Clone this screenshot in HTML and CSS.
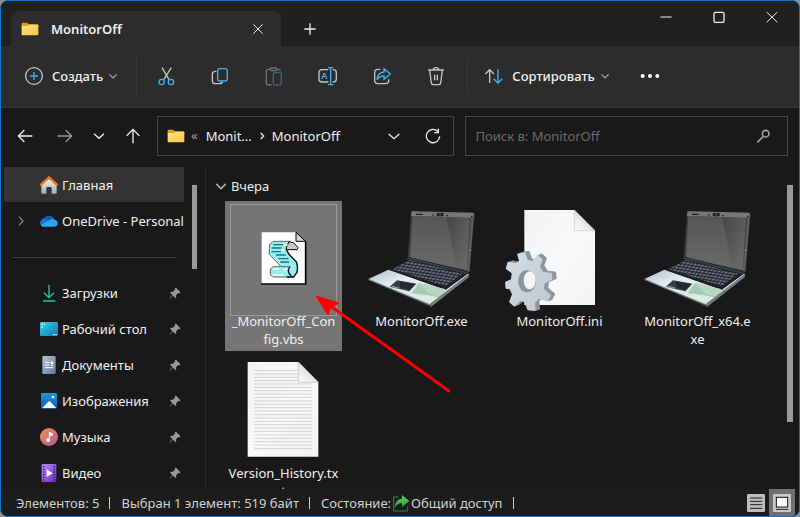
FILE: index.html
```html
<!DOCTYPE html>
<html lang="ru">
<head>
<meta charset="utf-8">
<title>MonitorOff</title>
<link rel="stylesheet" href="styles.css">
</head>
<body>
<svg class="defs" aria-hidden="true">
  <defs>
    <linearGradient id="gFolder" x1="0" y1="0" x2="1" y2="1"><stop offset="0" stop-color="#ffe391"/><stop offset="1" stop-color="#fcc536"/></linearGradient>
    <linearGradient id="gLid" x1="0" y1="0" x2="0" y2="1"><stop offset="0" stop-color="#565656"/><stop offset="1" stop-color="#6a6a6a"/></linearGradient>
    <linearGradient id="gGlare" x1="0" y1="0" x2="1" y2="1"><stop offset="0" stop-color="#454545"/><stop offset="1" stop-color="#6e6e6e"/></linearGradient>
    <linearGradient id="gPalm" x1="0" y1="0" x2="1" y2="1"><stop offset="0" stop-color="#aebcc4"/><stop offset=".3" stop-color="#e3ecf1"/><stop offset=".55" stop-color="#dce9e6"/><stop offset="1" stop-color="#dfeae2"/></linearGradient>
    <linearGradient id="gPage" x1="0" y1="0" x2="1" y2="1"><stop offset="0" stop-color="#f1f2f3"/><stop offset=".5" stop-color="#f8f9fb"/><stop offset="1" stop-color="#f3f4f6"/></linearGradient>
    <linearGradient id="gFold" x1="0" y1="1" x2="1" y2="0"><stop offset="0" stop-color="#fdfdfd"/><stop offset="1" stop-color="#c9c9c9"/></linearGradient>
    <linearGradient id="gGear" x1="0" y1="0" x2="1" y2="1"><stop offset="0" stop-color="#d5dee5"/><stop offset="1" stop-color="#bcc7d0"/></linearGradient>
    <linearGradient id="gHome" x1="0" y1="0" x2="0" y2="1"><stop offset="0" stop-color="#f2f2f2"/><stop offset="1" stop-color="#a9a9a9"/></linearGradient>
    <linearGradient id="gDesk" x1="0" y1="0" x2="1" y2="1"><stop offset="0" stop-color="#35d3e6"/><stop offset="1" stop-color="#0d78b8"/></linearGradient>
    <linearGradient id="gDoc" x1="0" y1="0" x2="1" y2="1"><stop offset="0" stop-color="#b3c4d8"/><stop offset="1" stop-color="#60799b"/></linearGradient>
    <linearGradient id="gPic" x1="0" y1="0" x2="0" y2="1"><stop offset="0" stop-color="#2196e0"/><stop offset="1" stop-color="#0b5cad"/></linearGradient>
    <linearGradient id="gMusic" x1="0" y1="0" x2="1" y2="1"><stop offset="0" stop-color="#f0915a"/><stop offset=".6" stop-color="#cf6a74"/><stop offset="1" stop-color="#a85aa8"/></linearGradient>
    <linearGradient id="gVideo" x1="0" y1="0" x2="1" y2="1"><stop offset="0" stop-color="#b78af2"/><stop offset="1" stop-color="#6b2fc0"/></linearGradient>
    <linearGradient id="gShare" x1="0" y1="0" x2="0" y2="1"><stop offset="0" stop-color="#5ed257"/><stop offset="1" stop-color="#239b3a"/></linearGradient>
    <pattern id="pKeys" width="11" height="9" patternUnits="userSpaceOnUse" patternTransform="matrix(1 .16 -.62 .9 0 0)"><rect width="11" height="9" fill="#20232b"/><rect x="1" y="1" width="8" height="5" fill="#747c8d"/></pattern>
    <pattern id="pDither" width="8" height="8" patternUnits="userSpaceOnUse"><rect width="8" height="8" fill="#f0ffff"/><rect width="4" height="4" fill="#3fdede"/><rect x="4" y="4" width="4" height="4" fill="#3fdede"/></pattern>
    <symbol id="folder" viewBox="0 0 54 42"><path d="M2 9V5q0-3 3-3h13l6 5h25q3 0 3 3v6H2z" fill="#e59f14"/><path d="M2 12h18l5-4h24q3 0 3 3v26q0 3-3 3H5q-3 0-3-3z" fill="url(#gFolder)"/></symbol>
    <symbol id="pin" viewBox="0 0 42 42"><path d="M24 2L40 18 37 22 33 21 25 28Q27 34 23 39L14 30 3 40 2 39 12 28 3 19Q8 15 14 17L21 9 20 6z" fill="#929ba4"/></symbol>
    <symbol id="chev" viewBox="0 0 30 30"><path d="M6 11l9 9 9-9" fill="none" stroke="currentColor" stroke-width="3"/></symbol>
    <symbol id="laptop" viewBox="9 3 351 324">
      <path d="M153 38q1-4 5-4l180 4q5 1 5 6l-14 170q-1 4-4 4l-181-42q-2-1-1-5z" fill="#3a3a3a"/>
      <path d="M154 38q1-4 5-4l179 4q5 1 5 6l-1 10-189-6z" fill="#777"/>
      <path d="M157 48l172 7-9 155-170-37z" fill="url(#gLid)"/>
      <path d="M259 53l70 3-9 152-31-7z" fill="url(#gGlare)"/>
      <path d="M334 46l8 0-14 168-8-2z" fill="#5b5c5d"/>
      <rect x="230" y="39" width="21" height="10" rx="3" fill="#14171d"/><rect x="236" y="41" width="9" height="5" fill="#2b4f94"/>
      <path d="M168 43h20M217 45h4M259 47h5M333 50h4" stroke="#202020" stroke-width="4"/><path d="M328 151h4" stroke="#bbb" stroke-width="3"/>
      <path d="M25 236l122-66 180 47 1 8-115 92-5 1z" fill="#17191d"/>
      <path d="M146 171l181 47-9 6-178-47z" fill="#3b4046"/>
      <path d="M25 237l60-28 172 60 66-47 5 1-115 90-5 3z" fill="url(#gPalm)"/>
      <path d="M90 209l58-31 172 44-63 47z" fill="#1d2026"/>
      <path d="M97 207l52-27 158 41-50 38z" fill="url(#pKeys)"/>
      <path d="M177 249l79 19-15 25-44-9-42-4z" fill="#a7c8b2"/><path d="M177 249l79 19-14 24-35-11z" fill="#b9d6c3"/>
      <path d="M111 241l58 10-21 23-59-14z" fill="#383e44"/><path d="M119 243l47 9-18 18-28-8z" fill="#242a30"/><path d="M97 257l22 6-4 4-22-6z" fill="#8e989d"/>
      <path d="M210 311l115-88 2 8-114 90z" fill="#727b7e"/><path d="M25 237l184 75 3 9L27 242z" fill="#758087"/><path d="M28 243l183 76" stroke="#15171a" stroke-width="3"/>
    </symbol>
    <path id="gearEdge" d="M66 161L90 157 98 179 112 184 127 164 143 178 135 200 145 216 170 219 172 240 149 250 147 267 168 286 158 305 132 296 120 308 122 333 98 331 88 306 76 303 58 320 42 306 51 283 44 268 32 266 30 246 48 238 50 220 32 206 38 185 60 190 72 183z"/>
  </defs>
</svg>
<div class="window">
  <header class="titlebar">
    <div class="tab">
      <svg class="folder"><use href="#folder"/></svg>
      <span class="tab-title">MonitorOff</span>
      <button class="btn" aria-label="Закрыть вкладку"><svg class="ic12" viewBox="0 0 36 36"><path d="M4 4l28 28M32 4L4 32" class="w"/></svg></button>
    </div>
    <button class="btn newtab" aria-label="Новая вкладка"><svg class="ic12" viewBox="0 0 36 36"><path d="M18 1v34M1 18h34" class="w bold"/></svg></button>
    <div class="caption">
      <button class="btn" aria-label="Свернуть"><svg class="ic12" viewBox="0 0 36 36"><path d="M1 18h34" class="w"/></svg></button>
      <button class="btn" aria-label="Развернуть"><svg class="ic12" viewBox="0 0 36 36"><rect x="3" y="4" width="30" height="30" rx="4" class="w bold"/></svg></button>
      <button class="btn" aria-label="Закрыть"><svg class="ic12" viewBox="0 0 36 36"><path d="M2 3l32 31M34 3L2 34" class="w"/></svg></button>
    </div>
  </header>

  <div class="toolbar" role="toolbar">
    <button class="btn command"><svg class="ic20" viewBox="0 0 60 60"><circle cx="30" cy="30" r="25" class="g"/><path d="M30 18v24M18 30h24" class="b"/></svg>Создать<svg class="chev"><use href="#chev"/></svg></button>
    <div class="tools">
      <button class="btn" aria-label="Вырезать"><svg class="ic20" viewBox="465 200 60 60"><path d="M483 205l21 36M511 205l-23 36" class="g"/><circle cx="482" cy="248" r="8" class="b"/><circle cx="510" cy="248" r="8" class="b"/></svg></button>
      <button class="btn" aria-label="Копировать"><svg class="ic20" viewBox="630 200 60 60"><path d="M649 216h-3q-9 0-9 9v19q0 9 9 9h12q8 0 9-5" class="g"/><rect x="653" y="208" width="29" height="37" rx="7" class="b"/></svg></button>
      <button class="btn dim" aria-label="Вставить"><svg class="ic20" viewBox="792 200 60 60"><path d="M815 257h-10q-6 0-6-6v-35q0-6 6-6h5M832 210h3q6 0 6 6" class="g"/><rect x="810" y="206" width="21" height="8" rx="4" class="g"/><rect x="820" y="220" width="24" height="37" rx="5" class="b"/></svg></button>
      <button class="btn" aria-label="Переименовать"><svg class="ic20" viewBox="-5 201 60 60"><path d="M26 212H7q-9 0-9 9v19q0 9 9 9h19M39 212h2q9 0 9 9v19q0 9-9 9h-2" class="g"/><path d="M33 206v51M25 206h16M25 257h16" class="b"/><text x="5" y="241" class="glyph">A</text></svg></button>
      <button class="btn" aria-label="Поделиться"><svg class="ic20" viewBox="157 200 60 60"><path d="M182 210h-7q-10 0-10 10v23q0 10 10 10h22q10 0 10-10v-3" class="g"/><path d="M193 208l19 16-19 16v-10q-14 0-21 11 2-22 21-23z" class="b"/></svg></button>
      <button class="btn" aria-label="Удалить"><svg class="ic20" viewBox="320 200 60 60"><path d="M326 212h48M342 211q0-6 8-6t8 6M331 213l5 38q1 5 6 5h16q5 0 6-5l5-38M346 226v17M354 226v17" class="g"/></svg></button>
    </div>
    <button class="btn command"><svg class="ic20" viewBox="494 200 60 60"><path d="M511 251V211M498 224l13-13 13 13" class="g"/><path d="M536 210v40M523 238l13 13 13-13" class="b"/></svg>Сортировать<svg class="chev"><use href="#chev"/></svg></button>
    <button class="btn more" aria-label="Подробнее"><svg class="ic20" viewBox="0 0 60 60"><circle cx="8" cy="30" r="6"/><circle cx="30" cy="30" r="6"/><circle cx="52" cy="30" r="6"/></svg></button>
  </div>

  <nav class="navbar">
    <div class="history">
      <button class="btn back" aria-label="Назад"><svg class="ic16" viewBox="0 0 48 48"><path d="M46 24H4M22 6L4 24l18 18" class="w bold"/></svg></button>
      <button class="btn faded" aria-label="Вперед"><svg class="ic16" viewBox="0 0 48 48"><path d="M2 24h42M26 6l18 18-18 18" class="w bold"/></svg></button>
      <button class="btn" aria-label="Последние расположения"><svg class="ic12" viewBox="0 0 36 36"><path d="M3 11l15 14 15-14" class="w bold"/></svg></button>
      <button class="btn" aria-label="Вверх"><svg class="ic16" viewBox="0 0 48 48"><path d="M24 46V4M5 23L24 4l19 19" class="w bold"/></svg></button>
    </div>
    <div class="address">
      <svg class="folder"><use href="#folder"/></svg>
      <span class="back-mark">«</span>
      <a href="#">Monit...</a>
      <svg class="crumb" viewBox="0 0 30 30"><path d="M11 6l9 9-9 9" class="w bold"/></svg>
      <a href="#" class="current">MonitorOff</a>
      <button class="btn" aria-label="Предыдущие расположения"><svg class="ic12" viewBox="0 0 36 36"><path d="M2 12l16 14 16-14" class="w bold"/></svg></button>
      <button class="btn refresh" aria-label="Обновить"><svg class="ic16" viewBox="0 0 48 48"><path d="M44 25A20 20 0 1 1 38 10M40 2v12H28" class="w bold"/></svg></button>
    </div>
    <div class="search">
      <input type="search" aria-label="Поиск" placeholder="Поиск в: MonitorOff">
      <svg class="ic16" viewBox="0 0 48 48"><circle cx="32" cy="17" r="10"/><path d="M25 25L7 43"/></svg>
    </div>
  </nav>

  <div class="body">
    <aside class="sidebar">
      <ul class="places">
        <li><a href="#" class="place active"><svg class="pic" viewBox="0 0 54 54"><path d="M4 27L27 8l23 19v23q0 3-3 3H35V36q0-3-3-3H22q-3 0-3 3v17H7q-3 0-3-3z" fill="url(#gHome)"/><path d="M3 26L27 4l24 22" fill="none" stroke="#e8761f" stroke-width="7" stroke-linecap="round" stroke-linejoin="round"/></svg>Главная</a></li>
        <li><a href="#" class="place"><svg class="expand" viewBox="0 0 30 36"><path d="M9 5l12 13L9 31"/></svg><svg class="pic" viewBox="0 0 54 54"><path d="M8 34a14 14 0 0 1 7-18 17 17 0 0 1 28 6L24 40z" fill="#0b62b5"/><path d="M12 44a12 12 0 1 1 7-22L44 40z" fill="#1277d4"/><path d="M12 44q-8 0-9-6l25-13q7-8 16-2 9 2 9 11 0 10-10 10z" fill="#2ba6ee"/></svg>OneDrive - Personal</a></li>
      </ul>
      <hr>
      <ul class="places">
        <li><a href="#" class="place"><svg class="pic" viewBox="0 0 54 54"><path d="M27 2v38M12 26l15 15 15-15M9 51h37" fill="none" stroke="#21c79c" stroke-width="4"/></svg>Загрузки<svg class="pin"><use href="#pin"/></svg></a></li>
        <li><a href="#" class="place"><svg class="pic" viewBox="0 0 54 54"><rect y="6" width="54" height="42" rx="4" fill="url(#gDesk)"/><path d="M5 13h4M5 22h4M12 13h3M39 44h4M46 44h4" stroke="#dffaff" stroke-width="4"/></svg>Рабочий стол<svg class="pin"><use href="#pin"/></svg></a></li>
        <li><a href="#" class="place"><svg class="pic" viewBox="0 0 54 54"><rect x="7" width="40" height="54" rx="4" fill="url(#gDoc)"/><path d="M15 19h13M15 27h13M15 35h25M33 28h7" stroke="#fff" stroke-width="3"/><rect x="32" y="17" width="8" height="7" fill="#fff"/></svg>Документы<svg class="pin"><use href="#pin"/></svg></a></li>
        <li><a href="#" class="place"><svg class="pic" viewBox="0 0 54 54"><rect x="3" y="3" width="48" height="48" rx="4" fill="url(#gPic)"/><path d="M7 47l18-18q3-3 6 0l17 18q-1 1-3 1H10q-2 0-3-1z" fill="#fff"/><circle cx="39" cy="15" r="4" fill="#fff"/></svg>Изображения<svg class="pin"><use href="#pin"/></svg></a></li>
        <li><a href="#" class="place"><svg class="pic" viewBox="0 0 54 54"><circle cx="27" cy="27" r="27" fill="url(#gMusic)"/><circle cx="24" cy="36" r="6" fill="#fff"/><path d="M28 36V13l9 4v6l-9-3" fill="#fff" stroke="#fff" stroke-width="3"/></svg>Музыка<svg class="pin"><use href="#pin"/></svg></a></li>
        <li><a href="#" class="place"><svg class="pic" viewBox="0 0 54 54"><rect x="5" width="44" height="54" rx="4" fill="url(#gVideo)"/><path d="M11 6v46M43 6v46" stroke="#3a1480" stroke-width="4" stroke-dasharray="4 4"/><path d="M20 16v23l18-11z" fill="#fff"/></svg>Видео<svg class="pin"><use href="#pin"/></svg></a></li>
      </ul>
    </aside>
    <div class="track side-track"><div class="thumb"></div></div>
    <main class="content">
      <h2 class="group"><svg class="chev"><use href="#chev"/></svg>Вчера</h2>
      <ul class="files">
        <li class="tile selected">
          <svg class="thumbnail" viewBox="30 18 351 324">
            <path d="M140 112h103l29 29v127H140z" fill="#fff"/><path d="M138 267h134V140" fill="none" stroke="#000" stroke-width="5"/><path d="M243 112v27h29z" fill="#d4d4d4" stroke="#000" stroke-width="3"/>
            <path d="M174 139H224L230 150 213 162 222 178 244 200Q250 214 246 232L236 246H176L166 240V222L176 215H198L184 200 163 178V150z" fill="url(#pDither)" stroke="#666" stroke-width="3"/>
            <path d="M222 140L236 143 249 158 246 164H218L213 160z" fill="#c8c8c8" stroke="#000" stroke-width="3"/>
            <path d="M213 162L222 178 243 199Q250 210 246 232L236 246H215M225 215q-12 14 4 28" fill="none" stroke="#111" stroke-width="4"/>
            <path d="M175 149h29M170 159h30M169 170h28M183 180h29M190 191h30M196 201h26" stroke="#067a80" stroke-width="4"/>
            <path d="M198 215h28" stroke="#666" stroke-width="3"/>
            <path d="M172 222h20M204 224h12M172 240h34M208 150h10M200 165h8" fill="none" stroke="#fff" stroke-width="5"/>
          </svg>
          <a href="#" class="name">_MonitorOff_Con<wbr>fig.vbs</a>
          <svg class="pointer" viewBox="0 0 138 100" aria-hidden="true"><path d="M14 10l120 86" stroke="#f00" stroke-width="3" stroke-linecap="round"/><path d="M1 1l23 7-9 5-2 7z" fill="#f00" stroke="#f00" stroke-width="1"/></svg>
        </li>
        <li class="tile"><svg class="thumbnail"><use href="#laptop"/></svg><a href="#" class="name">MonitorOff.exe</a></li>
        <li class="tile">
          <svg class="thumbnail" viewBox="18 3 351 324">
            <path d="M88 30h150l62 62v223H88z" fill="url(#gPage)"/><path d="M238 30v62h62z" fill="url(#gFold)" stroke="#c4c4c4" stroke-width="2"/>
            <g fill="#8d979f"><use href="#gearEdge" x="13" y="-4"/><use href="#gearEdge" x="9" y="-3"/><use href="#gearEdge" x="5" y="-1"/></g>
            <use href="#gearEdge" fill="url(#gGear)"/>
            <ellipse cx="96" cy="244" rx="27" ry="33" fill="#8c949c"/><ellipse cx="104" cy="241" rx="18" ry="27" fill="#f4f5f7"/>
          </svg>
          <a href="#" class="name">MonitorOff.ini</a>
        </li>
        <li class="tile"><svg class="thumbnail"><use href="#laptop"/></svg><a href="#" class="name">MonitorOff_x64.e<wbr>xe</a></li>
        <li class="tile">
          <svg class="thumbnail" viewBox="-15 9 351 324">
            <path d="M53 36h152l60 60v224H53z" fill="url(#gPage)"/>
            <path d="M73 62h130M73 72h130M73 82h130M73 92h130M73 102h173M73 112h173M73 122h173M73 132h173M73 142h173M73 153h173M73 163h173M73 173h173M73 183h173M73 194h173M73 204h173M73 214h173M73 224h173M73 234h173M73 244h173M73 255h173M73 265h173M73 275h173M73 285h173M73 296h173" stroke="#cfd2d4" stroke-width="3"/>
            <path d="M205 36v61h60z" fill="url(#gFold)" stroke="#b9b9b9" stroke-width="2"/>
          </svg>
          <a href="#" class="name">Version_History.tx<wbr>t</a>
        </li>
      </ul>
    </main>
    <div class="track main-track"><div class="thumb"></div></div>
  </div>

  <footer class="status">
    <span class="cell">Элементов: 5</span>
    <span class="cell">Выбран 1 элемент: 519 байт</span>
    <span class="cell">Состояние:<svg class="shared" viewBox="0 0 54 54"><path d="M20 9H5v42h42V38" fill="none" stroke="#2c8b36" stroke-width="3"/><path d="M30 3l22 18-22 18V28q-14-1-22 14Q8 16 30 14z" fill="url(#gShare)"/></svg>Общий доступ</span>
    <div class="views">
      <button class="btn view" aria-label="Таблица"><svg viewBox="0 0 54 54"><rect width="54" height="54" rx="4" fill="#bdbdbd"/><path d="M9 12h37M9 22h37M9 32h37M9 43h37" stroke="#222" stroke-width="3"/></svg></button>
      <button class="btn view on" aria-label="Крупные значки"><svg viewBox="0 0 54 54"><rect width="54" height="54" rx="4" fill="#c9c9c9"/><rect x="10" y="10" width="34" height="29" fill="#fff" stroke="#111" stroke-width="3"/><path d="M9 46h37" stroke="#222" stroke-width="3"/></svg></button>
    </div>
  </footer>
</div>
</body>
</html>
```
FILE: styles.css
```css
* { box-sizing: border-box; }

body {
  margin: 0;
  background: #8f8f8f;
  color: #f0f0f0;
  font: 13px/18px "Noto Sans", "Open Sans", sans-serif;
}

ul { list-style: none; margin: 0; padding: 0; }
a { color: inherit; text-decoration: none; }
svg { flex: none; display: block; }

.defs { position: absolute; width: 0; height: 0; }

.window {
  display: flex;
  flex-direction: column;
  height: 100vh;
  overflow: hidden;
  background: #191919;
  border: 1px solid #0b74cc;
  border-radius: 8px;
}

.btn {
  display: flex;
  align-items: center;
  justify-content: center;
  padding: 0;
  border: 0;
  background: none;
  color: inherit;
  font: inherit;
}

.ic12 { width: 12px; height: 12px; }
.ic16 { width: 16px; height: 16px; }
.ic20 { width: 20px; height: 20px; }
.chev { width: 12px; height: 12px; color: #a8a8a8; }
.folder { width: 18px; height: 14px; }

.w, .g, .b { fill: none; stroke: #ededed; stroke-width: 3; }
.g { stroke: #c4c4c4; stroke-width: 4; }
.b { stroke: #42b0ea; stroke-width: 4; }
.bold { stroke-width: 4; }
.glyph { fill: #42b0ea; font-size: 28px; font-weight: 600; }
.dim { opacity: .45; }
.faded { opacity: .6; }

/* Title bar */
.titlebar {
  display: flex;
  flex: none;
  height: 45px;
  padding: 10px 21px 0 10px;
  background: #202020;
}

.tab {
  display: flex;
  align-items: center;
  width: 270px;
  padding: 0 17px 0 10px;
  border-radius: 8px 8px 0 0;
  background: #2c2c2c;
}

.tab-title { flex: 1; margin-left: 12px; font-weight: 600; }
.newtab { margin-left: 23px; }
.caption { display: flex; gap: 41px; height: 12px; margin-left: auto; }

/* Command bar */
.toolbar {
  display: flex;
  flex: none;
  align-items: center;
  height: 62px;
  padding-left: 23px;
  border-bottom: 2px solid #343434;
  background: #2c2c2c;
}

.command { gap: 8px; font-weight: 500; }
.command .chev { margin-left: -4px; }

.tools {
  display: flex;
  gap: 34px;
  margin: 0 16px 0 17px;
  padding: 8px 21px 8px 19px;
  border: solid #383838;
  border-width: 0 1px;
}

.more { margin-left: 29px; fill: #fff; }

/* Navigation row */
.navbar {
  display: flex;
  flex: none;
  gap: 11px;
  padding: 8px 11px 10px 16px;
}

.history { display: flex; align-items: center; gap: 20px; margin-right: 5px; }
.back { margin-right: 4px; }

.address, .search {
  display: flex;
  align-items: center;
  height: 40px;
  border: 1px solid #454545;
}

.address { flex: 299; padding: 0 12px 0 9px; }
.search { flex: 322; padding: 0 16px 0 9px; }
.back-mark { margin: 0 8px 2px 6px; color: #a0a0a0; }
.crumb { width: 10px; height: 10px; margin: 0 5px; }
.current { margin-right: auto; }
.refresh { margin-left: 25px; }

.search input {
  flex: 1;
  min-width: 0;
  padding: 0;
  border: 0;
  outline: 0;
  background: none;
  color: inherit;
  font: inherit;
}

.search input::placeholder { color: #6b6b6b; opacity: 1; }
.search svg { fill: none; stroke: #a0a0a0; stroke-width: 5; }

/* Panes */
.body { display: flex; flex: 1; min-height: 0; }

.sidebar { width: 183px; padding: 1px 0 0 3px; overflow: hidden; }

.sidebar hr {
  height: 1px;
  margin: 18px 8px 17px;
  border: 0;
  background: #3c3c3c;
}

.place {
  display: flex;
  align-items: center;
  height: 36px;
  padding: 0 3px 0 36px;
  white-space: nowrap;
}

.place.active { border-bottom: 1px solid #191919; background: #333; }
.pic { width: 18px; height: 18px; margin-right: 4px; }
.expand { width: 10px; height: 12px; margin: 0 14px 0 -24px; fill: none; stroke: #858585; stroke-width: 4; }
.pin { width: 12px; height: 12px; margin-left: auto; }

.track { flex: none; padding-top: 19px; }
.track .thumb { background: #9a9a9a; }
.side-track { width: 22px; padding-left: 8px; border-right: 1px solid #2a2a2a; }
.side-track .thumb { width: 5px; height: 84px; }
.main-track { width: 12px; }
.main-track .thumb { width: 6px; height: 78%; }

.content { flex: 1; min-width: 0; padding: 11px 0 0 19px; overflow: hidden; }

.group {
  display: flex;
  align-items: center;
  gap: 2px;
  margin: 0 0 6px -12px;
  font: inherit;
}

.group .chev { width: 16px; height: 16px; }

.files {
  display: grid;
  grid-template-columns: repeat(auto-fill, 117px);
  gap: 2px 21px;
}

.tile { position: relative; height: 150px; text-align: center; }
.thumbnail { width: 117px; height: 108px; margin-bottom: 3px; overflow: visible; }
.name { display: block; padding: 0 2px; }

.selected { background: #757575; }
.selected::before {
  content: "";
  position: absolute;
  inset: 3px 5px 35px;
  border: 1px solid #999;
}

.pointer { position: absolute; z-index: 1; top: 94px; left: 90px; width: 138px; height: 100px; }

/* Status bar */
.status {
  display: flex;
  flex: none;
  align-items: center;
  height: 27px;
  padding: 0 4px 0 15px;
  background: #1c1c1c;
  color: #d2d2d2;
}

.cell { display: flex; align-items: center; white-space: nowrap; }

.cell::after {
  content: "";
  width: 1px;
  height: 12px;
  margin: 0 11px 0 10px;
  background: #d2d2d2;
}

.shared { width: 18px; height: 18px; margin: 0 1px; }
.views { display: flex; align-self: stretch; margin-left: auto; }
.view { width: 26px; }
.view svg { width: 18px; height: 18px; }
.view.on { background: #707070; }
```
